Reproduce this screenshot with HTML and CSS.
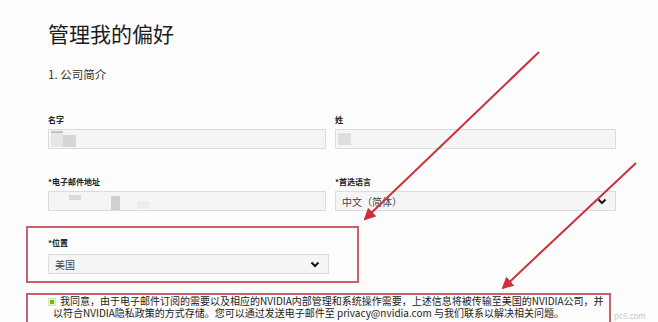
FILE: index.html
```html
<!DOCTYPE html>
<html>
<head>
    <title>管理我的偏好</title>
    <link rel="stylesheet" href="styles.css">
</head>
<body>
    <div class="page">
        <h1 class="title">管理我的偏好</h1>
        <h2 class="section">1. 公司简介</h2>

        <div class="fields">
            <div class="field">
                <label>名字</label>
                <div class="input">
                    <span class="blur b-name1"></span>
                    <span class="blur b-name2"></span>
                </div>
            </div>
            <div class="field">
                <label>姓</label>
                <div class="input">
                    <span class="blur b-last"></span>
                </div>
            </div>
            <div class="field">
                <label>*电子邮件地址</label>
                <div class="input">
                    <span class="blur b-mail1"></span>
                    <span class="blur b-mail2"></span>
                    <span class="blur b-mail3"></span>
                </div>
            </div>
            <div class="field">
                <label>*首选语言</label>
                <div class="input select">
                    <span>中文（简体）</span>
                    <svg class="chevron" width="10" height="7" viewBox="0 0 10 7"><path d="M1.5 1.5 L5 5 L8.5 1.5" fill="none" stroke="#111" stroke-width="2"/></svg>
                </div>
            </div>
        </div>

        <div class="highlight location">
            <label>*位置</label>
            <div class="input select">
                <span>美国</span>
                <svg class="chevron" width="10" height="7" viewBox="0 0 10 7"><path d="M1.5 1.5 L5 5 L8.5 1.5" fill="none" stroke="#111" stroke-width="2"/></svg>
            </div>
        </div>

        <div class="highlight consent">
            <p><span class="check"></span>我同意，由于电子邮件订阅的需要以及相应的NVIDIA内部管理和系统操作需要，上述信息将被传输至美国的NVIDIA公司，并以符合NVIDIA隐私政策的方式存储。您可以通过发送电子邮件至 privacy@nvidia.com 与我们联系以解决相关问题。</p>
        </div>

        <div class="watermark">pc6.com</div>

        <svg class="arrows" width="658" height="322" viewBox="0 0 658 322">
            <defs>
                <marker id="head" markerWidth="6" markerHeight="6" refX="5" refY="3" orient="auto" markerUnits="strokeWidth">
                    <path d="M0 0 L6 3 L0 6 Z" fill="#cf2f3a"/>
                </marker>
            </defs>
            <line x1="539" y1="52" x2="365" y2="219" stroke="#cf2f3a" stroke-width="2" marker-end="url(#head)"/>
            <line x1="636" y1="163" x2="503" y2="288" stroke="#cf2f3a" stroke-width="2" marker-end="url(#head)"/>
        </svg>
    </div>
</body>
</html>
```

FILE: styles.css
```css
body { margin: 0; background: #fdfdfd; font-family: "Noto Sans CJK SC", "Noto Sans", sans-serif; color: #1c1c1c; }
.page { position: relative; width: 658px; height: 322px; overflow: hidden; padding-left: 48px; box-sizing: border-box; }

.title { margin: 21px 0 0; font-size: 21px; line-height: 24px; font-weight: normal; }
.section { margin: 21px 0 0; font-size: 11.5px; line-height: 16px; font-weight: normal; color: #333; }

.fields { margin-top: 32px; display: grid; grid-template-columns: 278px 281px; column-gap: 9px; row-gap: 27px; }
label { display: block; font-size: 8px; line-height: 12px; font-weight: bold; color: #222; margin-bottom: 3px; }

.input {
    height: 20px;
    box-sizing: border-box;
    border: 1px solid #dcdcdc;
    background: #f5f5f5;
    display: flex;
    align-items: center;
    padding: 0 6px;
}
.select { justify-content: space-between; font-size: 10px; color: #444; padding-right: 8px; }
.chevron { display: block; }

.blur { display: block; background: #e2e2e2; }
.b-name1 { width: 12px; height: 16px; margin-left: -4px; background: #e6e6e6; border-top: 2px solid #c4c4c4; box-sizing: border-box; }
.b-name2 { width: 13px; height: 12px; margin-top: 4px; background: #d6d6d6; }
.b-last { width: 13px; height: 12px; margin-left: -4px; background: #dedede; }
.b-mail1 { width: 12px; height: 5px; margin: -8px 0 0 14px; background: #dadada; }
.b-mail2 { width: 9px; height: 14px; margin: 4px 0 0 30px; background: #d0d0d0; }
.b-mail3 { width: 12px; height: 8px; margin: 8px 0 0 17px; background: #ececec; }

.highlight { border: 2px solid #c9616c; margin-left: -22px; box-sizing: border-box; }
.location { width: 333px; height: 57px; margin-top: 15px; padding: 9px 0 0 20px; }
.location label { margin-bottom: 5px; }
.location .input { width: 281px; }
.consent { width: 585px; height: 60px; margin-top: 10px; padding: 0 0 0 25px; }
.consent p { margin: 0; font-size: 10px; line-height: 12px; color: #222; width: 556px; }
.check {
    display: inline-block;
    width: 8px;
    height: 8px;
    box-sizing: border-box;
    border: 1px solid #d9e8c7;
    background: #76b900;
    box-shadow: inset 0 0 0 1px #eaf3dd;
    margin: 0 4px 0 -5px;
    vertical-align: -1px;
}

.watermark { position: absolute; left: 614px; bottom: 1px; font-size: 8px; line-height: 10px; color: #c8c8d0; }
.arrows { position: absolute; left: 0; top: 0; pointer-events: none; }
```
